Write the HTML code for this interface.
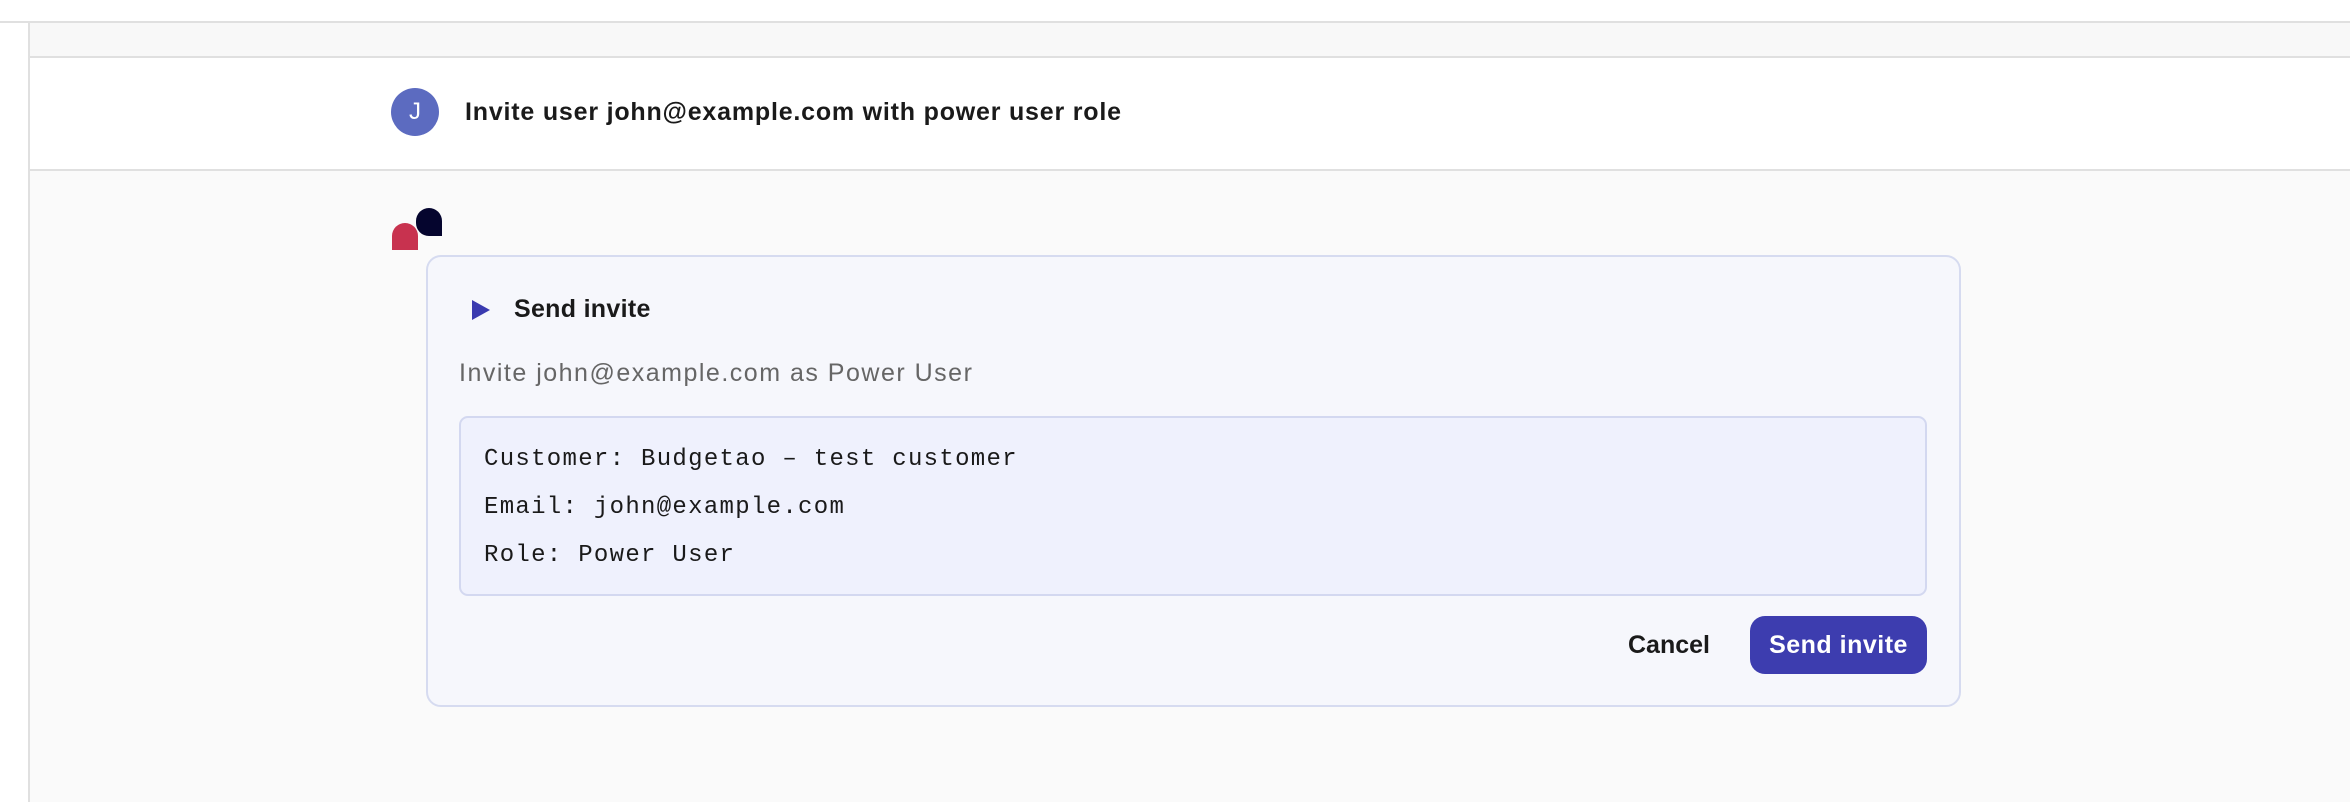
<!DOCTYPE html>
<html><head><style>
*{margin:0;padding:0;box-sizing:border-box}
body{width:2350px;height:802px;background:#fafafa;font-family:"Liberation Sans",sans-serif;position:relative;overflow:hidden}
.a{position:absolute}
</style></head><body>
<div class="a" style="left:0;top:0;width:2350px;height:22px;background:#fff"></div>
<div class="a" style="left:0;top:22px;width:28px;height:780px;background:#fff"></div>
<div class="a" style="left:0;top:21px;width:2350px;height:2px;background:#e0e0e0"></div>
<div class="a" style="left:28px;top:22px;width:2px;height:780px;background:#e0e0e0"></div>
<div class="a" style="left:30px;top:23px;width:2320px;height:33px;background:#f8f8f8"></div>
<div class="a" style="left:30px;top:56px;width:2320px;height:2px;background:#e0e0e0"></div>
<div class="a" style="left:30px;top:58px;width:2320px;height:111px;background:#fff"></div>
<div class="a" style="left:30px;top:169px;width:2320px;height:2px;background:#e0e0e0"></div>
<div class="a" style="left:391px;top:88px;width:48px;height:48px;border-radius:50%;background:#5c6bc0;color:#fff;font-size:24px;line-height:48px;text-align:center">J</div>
<div class="a" style="left:465px;top:96px;font-size:25px;font-weight:bold;color:#1a1a1a;line-height:32px;letter-spacing:0.8px">Invite user john@example.com with power user role</div>
<div class="a" style="left:416px;top:208px;width:26px;height:28px;background:#05052e;border-radius:13px 13px 0 13px"></div>
<div class="a" style="left:392px;top:223px;width:26px;height:27px;background:#c8324f;border-radius:13px 13px 0 0"></div>
<div class="a" style="left:426px;top:255px;width:1535px;height:452px;background:#f6f7fc;border:2px solid #d6dbf0;border-radius:15px"></div>
<svg class="a" style="left:470px;top:298px" width="22" height="24"><path d="M2 2 L20 12 L2 22 Z" fill="#3a3ab0"/></svg>
<div class="a" style="left:514px;top:293px;font-size:25px;font-weight:bold;color:#1a1a1a;line-height:32px;letter-spacing:0.3px">Send invite</div>
<div class="a" style="left:459px;top:357px;font-size:25px;color:#666;line-height:32px;letter-spacing:1.5px">Invite john@example.com as Power User</div>
<div class="a" style="left:459px;top:416px;width:1468px;height:180px;background:#eff1fd;border:2px solid #d3d8f0;border-radius:9px"></div>
<div class="a" style="left:484px;top:436px;font-family:'Liberation Mono',monospace;font-size:24px;color:#1a1a1a;line-height:48px;white-space:pre;letter-spacing:1.3px">Customer: Budgetao – test customer
Email: john@example.com
Role: Power User</div>
<div class="a" style="left:1628px;top:629px;font-size:25px;font-weight:bold;color:#1a1a1a;line-height:32px">Cancel</div>
<div class="a" style="left:1750px;top:616px;width:177px;height:58px;background:#3d3daf;border-radius:15px;color:#fff;font-size:25px;font-weight:bold;line-height:58px;text-align:center;letter-spacing:0.5px">Send invite</div>
</body></html>
